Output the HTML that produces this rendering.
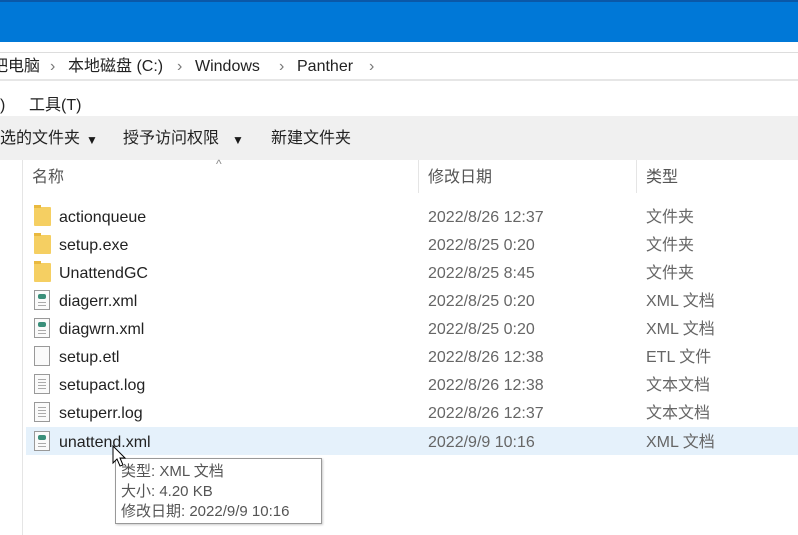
<!DOCTYPE html>
<html><head><meta charset="utf-8"><style>
*{margin:0;padding:0;box-sizing:border-box}
body{width:798px;height:535px;overflow:hidden;background:#fff;font-family:"Liberation Sans","Noto Sans CJK SC",sans-serif;position:relative;color:#1a1a1a}
.a{position:absolute;white-space:nowrap;line-height:18px}
.t{font-size:16px}
.row{position:absolute;left:26px;right:0;height:28px}
.nm,.dt,.ty{position:absolute;top:7px;font-size:16px;line-height:18px;white-space:nowrap}
.nm{left:33px;color:#222}
.dt{left:402px;color:#666}
.ty{left:620px;color:#666}
.fold{position:absolute;left:8px;top:5px;width:17px;height:19px;background:#f5cf62;border-radius:1px}
.fold:before{content:"";position:absolute;left:0;top:-2px;width:7px;height:3px;background:#e9b93f}
.doc{position:absolute;left:8px;top:4px;width:16px;height:20px;border:1px solid #999;background:#fafafa}
.doc i{position:absolute;left:3px;right:3px;height:1px;background:#aaa}
.x{position:absolute;left:3px;top:3px;width:8px;height:5px;background:#3a8f7a;border-radius:2px}
</style></head><body>
<div class="a" style="left:0;top:0;width:798px;height:42px;background:#0078d7;border-top:2px solid #0a58a8"></div>
<div class="a" style="left:0;top:52px;width:798px;height:1px;background:#ddd"></div>
<div class="a t" style="left:-8px;top:58px;color:#222">吧电脑</div>
<div class="a t" style="left:50px;top:58px;color:#777">›</div>
<div class="a t" style="left:68px;top:58px;color:#222">本地磁盘 (C:)</div>
<div class="a t" style="left:177px;top:58px;color:#777">›</div>
<div class="a t" style="left:195px;top:58px;color:#222">Windows</div>
<div class="a t" style="left:279px;top:58px;color:#777">›</div>
<div class="a t" style="left:297px;top:58px;color:#222">Panther</div>
<div class="a t" style="left:369px;top:58px;color:#777">›</div>
<div class="a" style="left:0;top:79px;width:798px;height:2px;background:#e6e6e6"></div>
<div class="a t" style="left:0;top:97px;color:#222">)</div>
<div class="a t" style="left:29px;top:97px;color:#222">工具(T)</div>
<div class="a" style="left:0;top:116px;width:798px;height:44px;background:#f0f0f0"></div>
<div class="a t" style="left:0;top:130px;color:#222">选的文件夹</div>
<div class="a" style="left:86px;top:131px;font-size:12px">▼</div>
<div class="a t" style="left:123px;top:130px;color:#222">授予访问权限</div>
<div class="a" style="left:232px;top:131px;font-size:12px">▼</div>
<div class="a t" style="left:271px;top:130px;color:#222">新建文件夹</div>
<div class="a" style="left:22px;top:160px;width:1px;height:375px;background:#e5e5e5"></div>
<div class="a" style="left:216px;top:155px;font-size:12px;color:#888">^</div>
<div class="a t" style="left:32px;top:169px;color:#555">名称</div>
<div class="a" style="left:418px;top:160px;width:1px;height:33px;background:#e5e5e5"></div>
<div class="a t" style="left:428px;top:169px;color:#555">修改日期</div>
<div class="a" style="left:636px;top:160px;width:1px;height:33px;background:#e5e5e5"></div>
<div class="a t" style="left:646px;top:169px;color:#555">类型</div>

<div class="row" style="top:202px"><div class="fold"></div><div class="nm">actionqueue</div><div class="dt">2022/8/26 12:37</div><div class="ty">文件夹</div></div>
<div class="row" style="top:230px"><div class="fold"></div><div class="nm">setup.exe</div><div class="dt">2022/8/25 0:20</div><div class="ty">文件夹</div></div>
<div class="row" style="top:258px"><div class="fold"></div><div class="nm">UnattendGC</div><div class="dt">2022/8/25 8:45</div><div class="ty">文件夹</div></div>
<div class="row" style="top:286px"><div class="doc"><div class="x"></div><i style="top:11px"></i><i style="top:14px"></i></div><div class="nm">diagerr.xml</div><div class="dt">2022/8/25 0:20</div><div class="ty">XML 文档</div></div>
<div class="row" style="top:314px"><div class="doc"><div class="x"></div><i style="top:11px"></i><i style="top:14px"></i></div><div class="nm">diagwrn.xml</div><div class="dt">2022/8/25 0:20</div><div class="ty">XML 文档</div></div>
<div class="row" style="top:342px"><div class="doc"></div><div class="nm">setup.etl</div><div class="dt">2022/8/26 12:38</div><div class="ty">ETL 文件</div></div>
<div class="row" style="top:370px"><div class="doc"><i style="top:4px"></i><i style="top:7px"></i><i style="top:10px"></i><i style="top:13px"></i></div><div class="nm">setupact.log</div><div class="dt">2022/8/26 12:38</div><div class="ty">文本文档</div></div>
<div class="row" style="top:398px"><div class="doc"><i style="top:4px"></i><i style="top:7px"></i><i style="top:10px"></i><i style="top:13px"></i></div><div class="nm">setuperr.log</div><div class="dt">2022/8/26 12:37</div><div class="ty">文本文档</div></div>
<div class="row" style="top:427px;background:#e5f1fb"><div class="doc"><div class="x"></div><i style="top:11px"></i><i style="top:14px"></i></div><div class="nm">unattend.xml</div><div class="dt">2022/9/9 10:16</div><div class="ty">XML 文档</div></div>

<div class="a" style="left:115px;top:458px;width:207px;height:66px;background:#fff;border:1px solid #999;box-shadow:1px 1px 2px #ccc"></div>
<div class="a" style="left:121px;top:462px;font-size:15px;line-height:20px;color:#555">类型: XML 文档<br>大小: 4.20 KB<br>修改日期: 2022/9/9 10:16</div>
<svg class="a" style="left:112px;top:445px" width="16" height="24"><path d="M1 1 L1 18 L5 14 L8 21 L11 20 L8 13 L13 13 Z" fill="#fff" stroke="#000" stroke-width="1"/></svg>
</body></html>
